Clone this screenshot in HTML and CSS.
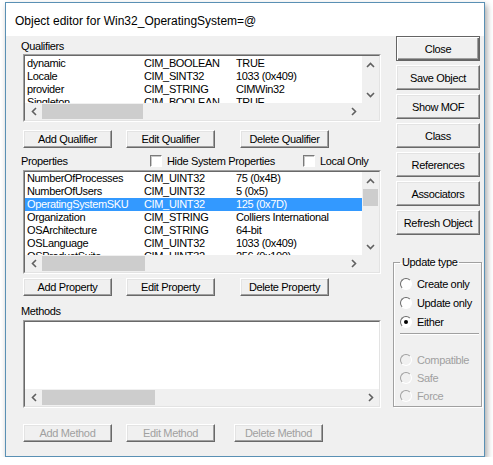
FILE: index.html
```html
<!DOCTYPE html>
<html lang="en">
<head>
  <meta charset="UTF-8">
  <title>Object editor</title>
  <link rel="stylesheet" href="styles.css">
</head>
<body>
  <div class="window">
    <div class="title-bar">Object editor for Win32_OperatingSystem=@</div>
    <div class="dialog-body">
      <div class="left-col">
        <div class="group-label label-qual">Qualifiers</div>
        <div class="listbox list-qual">
          <div class="list-inner">
            <div class="list-rows">
              <div class="row"><span class="c-name">dynamic</span><span class="c-type">CIM_BOOLEAN</span><span>TRUE</span></div>
              <div class="row"><span class="c-name">Locale</span><span class="c-type">CIM_SINT32</span><span>1033 (0x409)</span></div>
              <div class="row"><span class="c-name">provider</span><span class="c-type">CIM_STRING</span><span>CIMWin32</span></div>
              <div class="row"><span class="c-name">Singleton</span><span class="c-type">CIM_BOOLEAN</span><span>TRUE</span></div>
            </div>
            <div class="vscroll">
              <span class="arrow"><svg width="9" height="6" viewBox="0 0 9 6"><path d="M1 5 L4.5 1.5 L8 5" /></svg></span>
              <span class="track"></span>
              <span class="arrow"><svg width="9" height="6" viewBox="0 0 9 6"><path d="M1 1 L4.5 4.5 L8 1" /></svg></span>
            </div>
            <div class="hscroll">
              <span class="arrow"><svg width="6" height="9" viewBox="0 0 6 9"><path d="M5 1 L1.5 4.5 L5 8" /></svg></span>
              <span class="track"><span class="thumb thumb-qual"></span></span>
              <span class="arrow"><svg width="6" height="9" viewBox="0 0 6 9"><path d="M1 1 L4.5 4.5 L1 8" /></svg></span>
            </div>
            <div class="corner"></div>
          </div>
        </div>
        <div class="btn-row row-qual">
          <button class="btn btn-wide">Add Qualifier</button>
          <button class="btn">Edit Qualifier</button>
          <button class="btn btn-del">Delete Qualifier</button>
        </div>

        <div class="prop-head">
          <span class="group-label">Properties</span>
          <label class="check check-hide"><span class="box"></span>Hide System Properties</label>
          <label class="check check-local"><span class="box"></span>Local Only</label>
        </div>
        <div class="listbox list-prop">
          <div class="list-inner">
            <div class="list-rows">
              <div class="row"><span class="c-name">NumberOfProcesses</span><span class="c-type">CIM_UINT32</span><span>75 (0x4B)</span></div>
              <div class="row"><span class="c-name">NumberOfUsers</span><span class="c-type">CIM_UINT32</span><span>5 (0x5)</span></div>
              <div class="row selected"><span class="c-name">OperatingSystemSKU</span><span class="c-type">CIM_UINT32</span><span>125 (0x7D)</span></div>
              <div class="row"><span class="c-name">Organization</span><span class="c-type">CIM_STRING</span><span>Colliers International</span></div>
              <div class="row"><span class="c-name">OSArchitecture</span><span class="c-type">CIM_STRING</span><span>64-bit</span></div>
              <div class="row"><span class="c-name">OSLanguage</span><span class="c-type">CIM_UINT32</span><span>1033 (0x409)</span></div>
              <div class="row"><span class="c-name">OSProductSuite</span><span class="c-type">CIM_UINT32</span><span>256 (0x100)</span></div>
            </div>
            <div class="vscroll">
              <span class="arrow"><svg width="9" height="6" viewBox="0 0 9 6"><path d="M1 5 L4.5 1.5 L8 5" /></svg></span>
              <span class="track"><span class="thumb thumb-vprop"></span></span>
              <span class="arrow"><svg width="9" height="6" viewBox="0 0 9 6"><path d="M1 1 L4.5 4.5 L8 1" /></svg></span>
            </div>
            <div class="hscroll">
              <span class="arrow"><svg width="6" height="9" viewBox="0 0 6 9"><path d="M5 1 L1.5 4.5 L5 8" /></svg></span>
              <span class="track"><span class="thumb thumb-prop"></span></span>
              <span class="arrow"><svg width="6" height="9" viewBox="0 0 6 9"><path d="M1 1 L4.5 4.5 L1 8" /></svg></span>
            </div>
            <div class="corner"></div>
          </div>
        </div>
        <div class="btn-row row-prop">
          <button class="btn btn-wide">Add Property</button>
          <button class="btn">Edit Property</button>
          <button class="btn btn-del">Delete Property</button>
        </div>

        <div class="group-label label-meth">Methods</div>
        <div class="listbox list-meth">
          <div class="list-inner no-v">
            <div class="list-rows"></div>
            <div class="hscroll">
              <span class="arrow"><svg width="6" height="9" viewBox="0 0 6 9"><path d="M5 1 L1.5 4.5 L5 8" /></svg></span>
              <span class="track"><span class="thumb thumb-meth"></span></span>
              <span class="arrow"><svg width="6" height="9" viewBox="0 0 6 9"><path d="M1 1 L4.5 4.5 L1 8" /></svg></span>
            </div>
          </div>
        </div>
        <div class="btn-row row-meth">
          <button class="btn btn-wide" disabled>Add Method</button>
          <button class="btn" disabled>Edit Method</button>
          <button class="btn btn-del-m" disabled>Delete Method</button>
        </div>
      </div>

      <div class="right-col">
        <button class="btn side-btn btn-default">Close</button>
        <button class="btn side-btn">Save Object</button>
        <button class="btn side-btn">Show MOF</button>
        <button class="btn side-btn">Class</button>
        <button class="btn side-btn">References</button>
        <button class="btn side-btn">Associators</button>
        <button class="btn side-btn">Refresh Object</button>

        <fieldset class="update-box">
          <legend>Update type</legend>
          <div class="radio-row"><span class="radio"></span>Create only</div>
          <div class="radio-row"><span class="radio"></span>Update only</div>
          <div class="radio-row"><span class="radio checked"></span>Either</div>
          <div class="separator"></div>
          <div class="radio-row off"><span class="radio"></span>Compatible</div>
          <div class="radio-row off"><span class="radio"></span>Safe</div>
          <div class="radio-row off"><span class="radio"></span>Force</div>
        </fieldset>
      </div>
    </div>
  </div>
</body>
</html>
```

FILE: styles.css
```css
:root {
  --face: #f0f0f0;
  --shadow: #a0a0a0;
  --dark: #696969;
  --light: #e3e3e3;
  --select: #3399ff;
  --ui-font: 'Liberation Sans', Arial, sans-serif;
}
* { box-sizing: border-box; margin: 0; padding: 0; }
body { background: #fff; font-family: var(--ui-font); font-size: 11px; letter-spacing: -0.35px; color: #000; }
.window { margin: 2px 0 0 5px; width: 480px; height: 455px; border: 1px solid #5a90b4; background: var(--face); box-shadow: 2px 3px 6px rgba(0, 0, 0, 0.35); }
.title-bar { height: 33px; background: #fff; padding: 6px 0 0 9px; line-height: 24px; font-size: 12px; letter-spacing: 0; }
.dialog-body { display: grid; grid-template-columns: 358px 85px; column-gap: 15px; padding-left: 17px; }

/* left column */
.left-col { display: flex; flex-direction: column; }
.group-label { height: 14px; line-height: 14px; margin-left: -2px; }
.label-qual { margin-top: 3px; }
.label-meth { margin-top: 8px; }
.listbox { border: 1px solid; border-color: var(--shadow) #fff #fff var(--shadow); }
.list-inner { height: 100%; border: 1px solid; border-color: var(--dark) var(--light) var(--light) var(--dark); background: #fff; display: grid; grid-template-columns: 1fr 17px; grid-template-rows: 1fr 17px; overflow: hidden; }
.list-inner.no-v { grid-template-columns: 1fr; }
.list-qual { height: 68px; margin-top: 1px; }
.list-prop { height: 104px; margin-top: 1px; }
.list-meth { height: 88px; margin-top: 2px; }
.list-rows { overflow: hidden; }
.list-qual .list-rows { padding-top: 1px; }
.row { display: flex; height: 13px; line-height: 13px; padding-left: 2px; white-space: nowrap; }
.row.selected { background: var(--select); color: #fff; }
.c-name { width: 117px; }
.c-type { width: 92px; }

.vscroll { background: var(--face); display: flex; flex-direction: column; }
.hscroll { background: var(--face); display: flex; }
.arrow { flex: 0 0 17px; height: 17px; display: flex; align-items: center; justify-content: center; }
.arrow svg path { fill: none; stroke: #606060; stroke-width: 1.6; }
.track { flex: 1; position: relative; display: flex; }
.thumb { background: #cdcdcd; }
.hscroll .thumb { margin: 1px 0; }
.vscroll .thumb { margin: 0 1px; }
.thumb-qual { width: 101px; }
.thumb-prop { width: 103px; }
.thumb-meth { width: 113px; }
.vscroll .track { flex-direction: column; }
.thumb-vprop { height: 17px; margin-top: 21px; }
.corner { background: var(--face); }

.btn-row { display: flex; height: 18px; }
.row-qual { margin-top: 8px; }
.row-prop { margin-top: 4px; }
.row-meth { margin-top: 16px; }
.btn { font-family: var(--ui-font); font-size: 11px; letter-spacing: -0.35px; color: #000; background: var(--face); border: 1px solid; border-color: #fff var(--dark) var(--dark) #fff; box-shadow: inset -1px -1px var(--shadow), inset 1px 1px var(--light); width: 89px; height: 18px; padding: 0; }
.btn-row .btn + .btn { margin-left: 14px; }
.btn-row .btn.btn-del { margin-left: 25px; }
.btn-row .btn.btn-del-m { margin-left: 19px; }
.btn:disabled { color: var(--shadow); }

.prop-head { display: flex; align-items: center; height: 16px; margin-top: 5px; }
.prop-head .group-label { width: 129px; }
.check { display: flex; align-items: center; }
.check .box { width: 12px; height: 12px; background: #fff; border: 1px solid; border-color: #7a7a7a #fff #fff #7a7a7a; box-shadow: inset 1px 1px #c8c8c8; margin-right: 5px; }
.check-hide { width: 153px; }

/* right column */
.right-col { display: flex; flex-direction: column; }
.side-btn { width: 84px; height: 25px; margin-bottom: 4px; }
.btn-default { border-color: #646464; box-shadow: inset 1px 1px #fff, inset -1px -1px var(--dark), inset -2px -2px var(--shadow); }
.update-box { margin: 16px 0 0 -3px; width: 89px; height: 152px; border: 1px solid var(--shadow); box-shadow: inset 1px 1px #fff, 1px 1px #fff; padding: 5px 0 0 6px; }
.update-box legend { margin-left: 0; padding: 0 2px; line-height: 14px; }
.radio-row { display: flex; align-items: center; height: 19px; }
.radio-row.off { height: 18px; color: var(--shadow); }
.radio { width: 12px; height: 12px; border-radius: 50%; background: #fff; border: 1px solid; border-color: var(--dark) #fff #fff var(--dark); margin-right: 5px; display: flex; align-items: center; justify-content: center; }
.radio-row.off .radio { background: var(--face); border-color: var(--shadow) #fff #fff var(--shadow); }
.radio.checked::after { content: ''; width: 4px; height: 4px; border-radius: 50%; background: #000; }
.separator { height: 2px; margin: 2px 2px 16px 0; border-top: 1px solid var(--shadow); border-bottom: 1px solid #fff; }
```
